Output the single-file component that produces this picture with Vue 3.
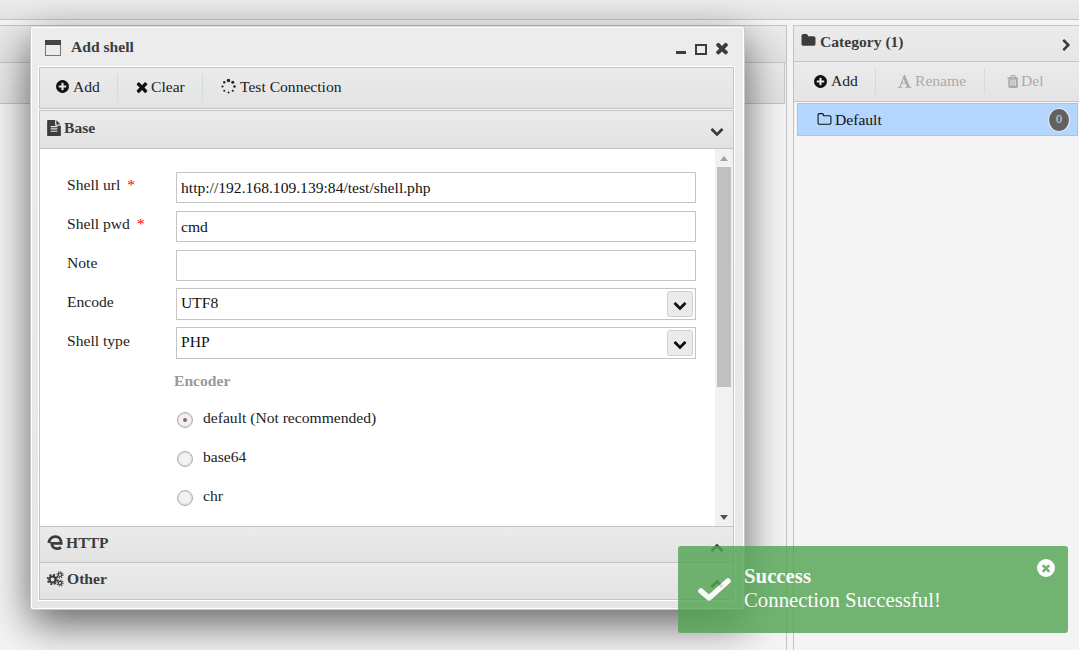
<script setup>
const P = {
  plus: 'M1344 960v-128q0-26-19-45t-45-19h-256v-256q0-26-19-45t-45-19h-128q-26 0-45 19t-19 45v256h-256q-26 0-45 19t-19 45v128q0 26 19 45t45 19h256v256q0 26 19 45t45 19h128q26 0 45-19t19-45v-256h256q26 0 45-19t19-45zm320-64q0 209-103 385.5t-279.5 279.5-385.5 103-385.5-103-279.5-279.5-103-385.5 103-385.5 279.5-279.5 385.5-103 385.5 103 279.5 279.5 103 385.5z',
  times: 'M1490 1322q0 40-28 68l-136 136q-28 28-68 28t-68-28l-294-294-294 294q-28 28-68 28t-68-28l-136-136q-28-28-28-68t28-68l294-294-294-294q-28-28-28-68t28-68l136-136q28-28 68-28t68 28l294 294 294-294q28-28 68-28t68 28l136 136q28 28 28 68t-28 68l-294 294 294 294q28 28 28 68z',
  down: 'M1683 808l-742 741q-19 19-45 19t-45-19l-742-741q-19-19-19-45.5t19-45.5l166-165q19-19 45-19t45 19l531 531 531-531q19-19 45-19t45 19l166 165q19 19 19 45.5t-19 45.5z',
  up: 'M1683 1331l-166 165q-19 19-45 19t-45-19l-531-531-531 531q-19 19-45 19t-45-19l-166-165q-19-19-19-45.5t19-45.5l742-741q19-19 45-19t45 19l742 741q19 19 19 45.5t-19 45.5z',
  right: 'M1363 877l-742 742q-19 19-45 19t-45-19l-166-166q-19-19-19-45t19-45l531-531-531-531q-19-19-19-45t19-45l166-166q19-19 45-19t45 19l742 742q19 19 19 45t-19 45z',
  folder: 'M1728 608v704q0 92-66 158t-158 66h-1216q-92 0-158-66t-66-158v-960q0-92 66-158t158-66h320q92 0 158 66t66 158v32h672q92 0 158 66t66 158z',
  folderO: 'M1600 1312v-704q0-40-28-68t-68-28h-704q-40 0-68-28t-28-68v-64q0-40-28-68t-68-28h-320q-40 0-68 28t-28 68v960q0 40 28 68t68 28h1216q40 0 68-28t28-68zm128-704v704q0 92-66 158t-158 66h-1216q-92 0-158-66t-66-158v-960q0-92 66-158t158-66h320q92 0 158 66t66 158v32h672q92 0 158 66t66 158z',
  trash: 'M704 1376v-704q0-14-9-23t-23-9h-64q-14 0-23 9t-9 23v704q0 14 9 23t23 9h64q14 0 23-9t9-23zm256 0v-704q0-14-9-23t-23-9h-64q-14 0-23 9t-9 23v704q0 14 9 23t23 9h64q14 0 23-9t9-23zm256 0v-704q0-14-9-23t-23-9h-64q-14 0-23 9t-9 23v704q0 14 9 23t23 9h64q14 0 23-9t9-23zm-544-992h448l-48-117q-7-9-17-11h-317q-10 2-17 11zm928 32v64q0 14-9 23t-23 9h-96v948q0 83-47 143.5t-113 60.5h-832q-66 0-113-58.5t-47-141.5v-952h-96q-14 0-23-9t-9-23v-64q0-14 9-23t23-9h309l70-167q15-37 54-63t79-26h320q40 0 79 26t54 63l70 167h309q14 0 23 9t9 23z',
  font: 'M789 559l-170 450q33 0 136.5 2t160.5 2q19 0 57-2-87-253-184-452zm-725 1105l2-79q23-7 56-12.5t57-10.5 49.5-14.5 44.5-29 31-50.5l237-616 280-724h128q8 14 11 21l205 480q33 78 106 257.5t114 274.5q15 34 58 144.5t72 168.5q20 45 35 57 19 15 88 29.5t84 20.5q6 38 6 57 0 5-.5 13.5t-.5 12.5q-63 0-190-8t-191-8q-76 0-215 7t-178 8q0-43 4-78l131-28q1 0 12.5-2.5t15.5-3.5 14.5-4.5 15-6.5 11-8 9-11 2.5-14q0-16-31-96.5t-72-177.5-42-100l-450-2q-26 58-76.5 195.5t-50.5 162.5q0 22 14 37.5t43.5 24.5 48.5 13.5 57 8.5 41 4q1 19 1 58 0 9-2 27-58 0-174.5-10t-174.5-10q-8 0-26.5 4t-21.5 4q-80 14-188 14z',
  file: 'M1024 512v-472q22 14 36 28l408 408q14 14 28 36h-472zm-128 32q0 40 28 68t68 28h544v1056q0 40-28 68t-68 28h-1344q-40 0-68-28t-28-68v-1600q0-40 28-68t68-28h800v544zm256 744v-64q0-14-9-23t-23-9h-704q-14 0-23 9t-9 23v64q0 14 9 23t23 9h704q14 0 23-9t9-23zm0-256v-64q0-14-9-23t-23-9h-704q-14 0-23 9t-9 23v64q0 14 9 23t23 9h704q14 0 23-9t9-23zm0-256v-64q0-14-9-23t-23-9h-704q-14 0-23 9t-9 23v64q0 14 9 23t23 9h704q14 0 23-9t9-23z'
}
const spinR = [1.7, 1.5, 1.3, 1.1, 1, 1, 1.1, 1.2]
const spinnerDots = spinR.map((r, i) => {
  const a = (i * Math.PI) / 4
  return { x: 7.5 + 6 * Math.sin(a), y: 7.5 - 6 * Math.cos(a), r }
})
const radios = [
  { label: 'default (Not recommended)', on: true },
  { label: 'base64', on: false },
  { label: 'chr', on: false }
]
</script>

<template>
  <div class="page">
    <div class="topbar"></div>
    <div class="main">
      <section class="left">
        <div class="left-head"></div>
        <div class="left-tools"></div>
      </section>
      <div class="splitter"></div>
      <aside class="right">
        <header class="right-head">
          <svg class="ic i-folder" viewBox="0 0 1792 1792"><path :d="P.folder" /></svg>
          <span class="b">Category (1)</span>
          <svg class="ic i-arrow" viewBox="0 0 1792 1792"><path :d="P.right" /></svg>
        </header>
        <div class="right-tools">
          <div class="tool t-a">
            <svg class="ic" viewBox="0 0 1792 1792"><path :d="P.plus" /></svg><span>Add</span>
          </div>
          <i class="sep"></i>
          <div class="tool t-b off">
            <svg class="ic" viewBox="0 0 1792 1792"><path :d="P.font" /></svg><span>Rename</span>
          </div>
          <i class="sep"></i>
          <div class="tool t-c off">
            <svg class="ic ic-s" viewBox="0 0 1408 1792"><path :d="P.trash" /></svg><span>Del</span>
          </div>
        </div>
        <div class="cat-list">
          <div class="cat">
            <svg class="ic i-fo" viewBox="0 0 1792 1792"><path :d="P.folderO" /></svg>
            <span>Default</span>
            <b class="badge">0</b>
          </div>
        </div>
      </aside>
    </div>

    <div class="window">
      <div class="win-head">
        <svg class="win-ic" viewBox="0 0 16 16"><rect x="0.5" y="0.5" width="15" height="15" fill="#ececec" stroke="#777" /><rect width="16" height="5" fill="#444" /></svg>
        <span class="b win-title">Add shell</span>
        <div class="win-ctl">
          <i class="c-min"></i>
          <i class="c-max"></i>
          <svg class="ic c-x" viewBox="0 0 1792 1792"><path :d="P.times" /></svg>
        </div>
      </div>
      <div class="win-body">
        <div class="win-tools">
          <div class="tool w-a"><svg class="ic" viewBox="0 0 1792 1792"><path :d="P.plus" /></svg><span>Add</span></div>
          <i class="sep"></i>
          <div class="tool w-b"><svg class="ic ic-x" viewBox="0 0 1792 1792"><path :d="P.times" /></svg><span>Clear</span></div>
          <i class="sep"></i>
          <div class="tool w-c">
            <svg class="spin" viewBox="0 0 15 15"><circle v-for="(d, i) in spinnerDots" :key="i" :cx="d.x" :cy="d.y" :r="d.r" /></svg>
            <span>Test Connection</span>
          </div>
        </div>
        <div class="acc">
          <div class="acc-head base">
            <svg class="ic i-file" viewBox="0 0 1536 1792"><path :d="P.file" /></svg>
            <span class="b">Base</span>
            <svg class="ic acc-arrow" viewBox="0 0 1792 1792"><path :d="P.down" /></svg>
          </div>
          <div class="acc-body">
            <form class="form" @submit.prevent>
              <label class="row"><span class="lab">Shell url<em>*</em></span><input class="inp" value="http://192.168.109.139:84/test/shell.php" /></label>
              <label class="row"><span class="lab">Shell pwd<em>*</em></span><input class="inp" value="cmd" /></label>
              <label class="row"><span class="lab">Note</span><input class="inp" value="" /></label>
              <div class="row r-sel">
                <span class="lab">Encode</span>
                <div class="sel"><span class="sel-val">UTF8</span><b class="sel-btn"><svg class="ic" viewBox="0 0 1792 1792"><path :d="P.down" /></svg></b></div>
              </div>
              <div class="row r-sel">
                <span class="lab">Shell type</span>
                <div class="sel"><span class="sel-val">PHP</span><b class="sel-btn"><svg class="ic" viewBox="0 0 1792 1792"><path :d="P.down" /></svg></b></div>
              </div>
              <div class="enc b">Encoder</div>
              <div class="radios">
                <div v-for="r in radios" :key="r.label" class="radio">
                  <i class="dot" :class="{ on: r.on }"></i><span>{{ r.label }}</span>
                </div>
              </div>
            </form>
            <div class="scroll">
              <i class="arr a-up"></i>
              <i class="thumb"></i>
              <i class="track"></i>
              <i class="arr a-down"></i>
            </div>
          </div>
          <div class="acc-head http">
            <svg class="i-edge" viewBox="0 0 16 16"><path d="M1.8 8C2.4 4 5 1.6 8.5 1.6C12 1.6 14.2 4.2 14.2 8.4H4.8C4.6 11.6 7.2 13.7 10 13.7C11.6 13.7 13 13.2 14 12.5" /></svg>
            <span class="b">HTTP</span>
            <svg class="ic acc-arrow" viewBox="0 0 1792 1792"><path :d="P.up" /></svg>
          </div>
          <div class="acc-head other">
            <svg class="i-cogs" viewBox="0 0 18 16">
              <g fill="none" stroke="#3c3c3c">
                <circle cx="6.5" cy="8.5" r="3" stroke-width="2.2" />
                <circle cx="6.5" cy="8.5" r="4.8" stroke-width="1.8" stroke-dasharray="2 1.77" />
                <circle cx="14" cy="3.8" r="1.7" stroke-width="1.2" />
                <circle cx="14" cy="3.8" r="3" stroke-width="1.1" stroke-dasharray="1.3 1.05" />
                <circle cx="14" cy="12" r="1.7" stroke-width="1.2" />
                <circle cx="14" cy="12" r="3" stroke-width="1.1" stroke-dasharray="1.3 1.05" />
              </g>
            </svg>
            <span class="b">Other</span>
            <svg class="ic acc-arrow" viewBox="0 0 1792 1792"><path :d="P.up" /></svg>
          </div>
        </div>
      </div>
    </div>

    <div class="toast">
      <svg class="t-check" viewBox="0 0 36 26"><path d="M4 14L12 21L31 4" /></svg>
      <div class="t-text">
        <div class="b">Success</div>
        <div>Connection Successful!</div>
      </div>
      <span class="t-close"><svg class="ic" viewBox="0 0 1792 1792"><path :d="P.times" /></svg></span>
    </div>
  </div>
</template>

<style>
html, body { margin: 0; padding: 0; overflow: hidden; }
</style>

<style scoped>
* { box-sizing: border-box; }
.page {
  position: relative;
  width: 1079px;
  height: 650px;
  overflow: hidden;
  display: flex;
  flex-direction: column;
  background: #f4f4f4;
  color: #222;
  font: 15.6px/20px "Liberation Serif", "Times New Roman", serif;
}
.b { font-weight: 700; color: #3c3c3c; }
.ic { width: 1em; height: 1em; fill: currentColor; flex: none; display: block; }
.topbar {
  height: 20px;
  flex: none;
  background: linear-gradient(#ececec, #e4e4e4);
  border-bottom: 1px solid #c4c4c4;
}
.main { flex: 1; display: flex; padding-top: 5px; min-height: 0; }
.left { width: 787px; flex: none; border-right: 1px solid #c4c4c4; border-top: 1px solid #c4c4c4; }
.left-head { height: 37px; background: linear-gradient(#ebebeb, #e2e2e2); border-bottom: 1px solid #c4c4c4; }
.left-tools { height: 41px; margin-right: 1px; background: linear-gradient(#ebebeb, #e2e2e2); border: solid #c4c4c4; border-width: 0 1px 1px 0; }
.splitter { width: 6px; flex: none; background: #f4f4f4; }
.right { flex: 1; border-left: 1px solid #c4c4c4; border-top: 1px solid #c4c4c4; min-width: 0; }
.right-head {
  height: 36px;
  display: flex;
  align-items: center;
  padding: 0 7px 4px 7px;
  background: linear-gradient(#ebebeb, #e6e6e6);
  border-bottom: 1px solid #c4c4c4;
}
.i-folder { font-size: 15px; color: #3c3c3c; margin-right: 4px; margin-top: -2px; }
.i-arrow { margin-left: auto; font-size: 13px; color: #3c3c3c; margin-top: 8px; margin-right: -1px; }
.right-tools {
  height: 40px;
  display: flex;
  align-items: center;
  padding: 0 0 1px 19px;
  background: linear-gradient(#ebebeb, #e4e4e4);
  border-bottom: 1px solid #c4c4c4;
}
.tool { display: flex; align-items: center; gap: 3px; }
.tool .ic { font-size: 15px; color: #111; }
.off { color: #aaa; }
.off .ic { color: #aaa; }
.off .ic-s { width: 13px; height: 15px; }
.sep { display: block; width: 1px; height: 26px; background: #cddbe2; flex: none; }
.t-a { width: 62px; }
.t-b { width: 87px; margin-left: 21px; }
.t-c { margin-left: 20px; }
.t-c.tool { gap: 3px; }
.cat-list { padding: 1px 1px 0 3px; }
.cat {
  height: 33px;
  display: flex;
  align-items: center;
  padding: 0 7px 0 19px;
  color: #111;
  background: #b4d5fe;
  border: 1px solid #c0c0c0;
}
.i-fo { font-size: 15px; margin-right: 3px; margin-top: -1px; }
.badge {
  margin-left: auto;
  width: 22px;
  height: 24px;
  border-radius: 50%;
  background: #616161;
  border: 1px solid #eee;
  color: #ddd;
  font-size: 12px;
  font-weight: 400;
  line-height: 21px;
  text-align: center;
}
.window {
  position: absolute;
  left: 30px;
  top: 26px;
  width: 715px;
  height: 584px;
  display: flex;
  flex-direction: column;
  padding: 0 9px 8px 7px;
  background: linear-gradient(#ececec, #e6e6e6);
  border: 1px solid #c8c8c8;
  border-top-color: #d8d8d8;
  outline: 1px solid #fff;
  outline-offset: -2px;
  border-radius: 3px;
  box-shadow: 0 14px 42px rgba(0, 0, 0, 0.6);
}
.win-head { height: 39px; flex: none; display: flex; align-items: center; padding: 0 3px 0 7px; }
.win-ic { width: 16px; height: 16px; margin-right: 10px; margin-top: 3px; }
.win-title { margin-top: 0; }
.win-ctl { margin-left: auto; display: flex; align-items: center; color: #3c3c3c; margin-top: 3px; margin-right: 1px; }
.c-min { width: 10px; height: 3px; background: #3c3c3c; margin-top: 9px; margin-right: 9px; }
.c-max { width: 12px; height: 11px; border: 2px solid #3c3c3c; margin-right: 6px; margin-top: 2px; }
.c-x { font-size: 18px; margin-top: -1px; }
.win-body {
  flex: 1;
  min-height: 0;
  display: flex;
  flex-direction: column;
  gap: 1px;
  background: #f4f4f4;
  border: 1px solid #fff;
}
.win-tools {
  height: 42px;
  flex: none;
  display: flex;
  align-items: center;
  padding: 0 0 3px 15px;
  background: linear-gradient(#ebebeb, #e3e3e3);
  border: 1px solid #c4c4c4;
}
.w-a { width: 62px; }
.w-b { width: 67px; margin-left: 17px; }
.w-c { margin-left: 18px; gap: 4px; }
.tool .ic-x { font-size: 16px; margin-left: -1px; }
.w-b.tool { gap: 1px; }
.spin { width: 15px; height: 15px; fill: #222; flex: none; }
.acc { flex: 1; min-height: 0; display: flex; flex-direction: column; border: 1px solid #c4c4c4; border-top: 0; background: #fff; }
.acc-head {
  flex: none;
  display: flex;
  align-items: center;
  padding: 0 9px 0 7px;
  background: linear-gradient(#ebebeb, #e2e2e2);
  border-top: 1px solid #c4c4c4;
}
.base { height: 38px; padding-bottom: 4px; }
.http { height: 36px; padding-bottom: 3px; }
.other { flex: 1; padding-bottom: 4px; }
.i-file { width: 14px; height: 16px; color: #3c3c3c; margin-right: 3px; }
.acc-arrow { margin-left: auto; font-size: 14px; color: #3c3c3c; margin-top: 7px; }
.acc-body { height: 378px; flex: none; display: flex; border-top: 1px solid #c4c4c4; background: #fff; min-height: 0; }
.form { flex: 1; min-width: 0; padding: 23px 19px 0 27px; display: flex; flex-direction: column; gap: 8px; }
.row { display: flex; align-items: flex-start; }
.lab { width: 109px; flex: none; padding-top: 3px; color: #222; }
.lab em { font-style: normal; color: #f00; margin-left: 7px; }
.inp {
  flex: 1;
  min-width: 0;
  height: 31px;
  padding: 0 4px;
  border: 1px solid #c4c4c4;
  outline: 0;
  color: #111;
  font: inherit;
  background: #fff;
}
.r-sel { margin-top: -1px; }
.r-sel .lab { padding-top: 4px; }
.sel {
  flex: 1;
  height: 32px;
  display: flex;
  align-items: center;
  justify-content: space-between;
  padding: 0 2px 0 4px;
  border: 1px solid #c4c4c4;
  color: #111;
}
.sel-val { margin-top: -3px; }
.sel-btn {
  width: 26px;
  height: 26px;
  display: flex;
  align-items: center;
  justify-content: center;
  background: #ebebeb;
  border: 1px solid #cfcfcf;
  border-radius: 3px;
}
.sel-btn .ic { font-size: 14px; color: #111; margin-top: 1px; }
.enc { color: #999; margin: 4px 0 0 107px; }
.radios { display: flex; flex-direction: column; gap: 19px; margin: 9px 0 0 110px; }
.radio { display: flex; align-items: center; }
.dot {
  width: 16px;
  height: 16px;
  margin-right: 10px;
  margin-top: 3px;
  border-radius: 50%;
  border: 1px solid #b4acac;
  box-shadow: inset 0 0 0 1px #ddd;
  background: #f2f2f2;
  display: flex;
  align-items: center;
  justify-content: center;
}
.dot.on::after { content: ""; width: 4px; height: 4px; border-radius: 50%; background: #9a5f5f; }
.scroll { width: 18px; flex: none; display: flex; flex-direction: column; align-items: stretch; background: #f1f1f1; }
.arr { height: 18px; flex: none; display: flex; align-items: center; justify-content: center; }
.arr::after { content: ""; border: 4px solid transparent; }
.a-up::after { border-bottom: 5px solid #a0a0a0; border-top: 0; }
.a-down::after { border-top: 5px solid #505050; border-bottom: 0; }
.thumb { height: 220px; margin: 0 2px 0 2px; background: #c0c0c0; flex: none; }
.track { flex: 1; }
.toast {
  position: absolute;
  left: 678px;
  top: 546px;
  width: 390px;
  height: 87px;
  display: flex;
  padding: 18px 12px 0 20px;
  background: #51a351;
  opacity: 0.8;
  border-radius: 3px;
  color: #fff;
  font-size: 20.8px;
  line-height: 24px;
}
.toast .b { color: #fff; }
.t-check { width: 36px; height: 26px; margin-top: 13px; margin-right: 10px; margin-left: -1px; fill: none; stroke: #fff; stroke-width: 5.5; stroke-linecap: round; stroke-linejoin: round; flex: none; }
.t-text { flex: 1; margin-left: 1px; }
.t-close {
  width: 18px;
  height: 18px;
  margin-top: -5px;
  margin-right: 1px;
  border-radius: 50%;
  background: #fff;
  color: #51a351;
  display: flex;
  align-items: center;
  justify-content: center;
}
.t-close .ic { font-size: 12px; }
.i-edge { width: 16px; height: 16px; margin-right: 3px; fill: none; stroke: #3c3c3c; stroke-width: 2.8; flex: none; }
.i-cogs { width: 18px; height: 16px; margin-right: 3px; margin-left: -1px; flex: none; }
</style>
